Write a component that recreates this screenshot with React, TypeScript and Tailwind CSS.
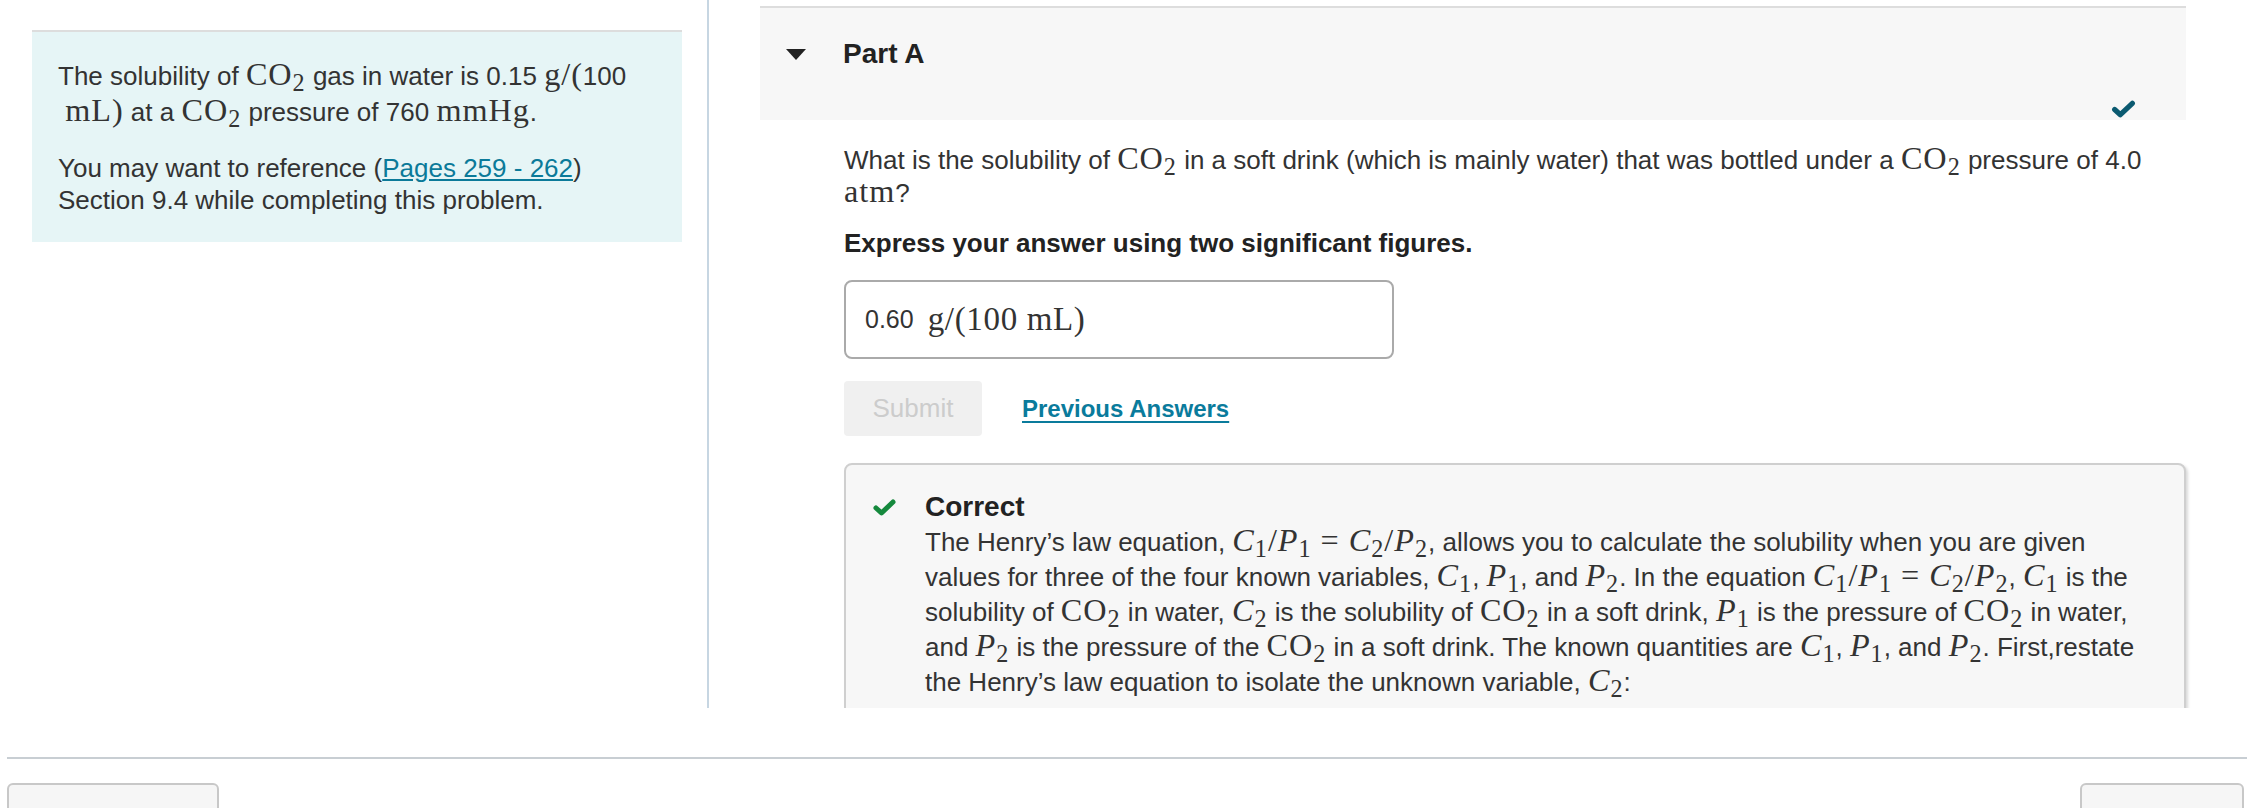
import React from "react";

const M = ({ children }: { children: React.ReactNode }) => (
  <span className="font-['Liberation_Serif','Times_New_Roman',serif] text-[1.24em] leading-none tracking-[0.03em]">
    {children}
  </span>
);

const CO2 = () => (
  <M>
    CO<sub>2</sub>
  </M>
);

const V = ({ v, n }: { v: string; n: string }) => (
  <M>
    <i>{v}</i>
    <sub>{n}</sub>
  </M>
);

const Eq = () => (
  <M>
    <i>C</i>
    <sub>1</sub>/<i>P</i>
    <sub>1</sub> = <i>C</i>
    <sub>2</sub>/<i>P</i>
    <sub>2</sub>
  </M>
);

function Check({ className }: { className: string }) {
  return (
    <svg viewBox="0 0 24 17" className={className} fill="none">
      <polyline
        points="3.5,9 9,14 20.5,3"
        stroke="currentColor"
        strokeWidth="5"
        strokeLinecap="round"
        strokeLinejoin="round"
      />
    </svg>
  );
}

export default function App() {
  return (
    <div className="h-[808px] w-full overflow-hidden bg-white font-['Liberation_Sans',Arial,sans-serif] text-[26px] text-[#333]">
      <div className="flex h-[708px] overflow-hidden">
        <aside className="w-[709px] shrink-0 border-r-2 border-[#c7d6e2] pl-[32px] pr-[25px] pt-[30px]">
          <div className="border-t-2 border-[#dddddd] bg-[#e6f5f6] px-[26px] pb-[26px] pt-[26px]">
            <p className="whitespace-nowrap leading-[36px]">
              The solubility of <CO2 /> gas in water is 0.15 <M>g/(</M>100
              <br />
              {"\u00a0"}
              <M>mL)</M> at a <CO2 /> pressure of 760 <M>mmHg</M>.
            </p>
            <p className="mt-[22px] whitespace-nowrap leading-[32px]">
              You may want to reference (
              <a className="text-[#0b7a99] underline underline-offset-2">Pages 259 - 262</a>)
              <br />
              Section 9.4 while completing this problem.
            </p>
          </div>
        </aside>

        <main className="min-w-0 flex-1 pl-[51px] pr-[68px] pt-[6px]">
          <div className="flex h-[114px] flex-col border-t-2 border-[#dddddd] bg-[#f7f7f7] pl-[26px] pr-[50px] pt-[29px]">
            <div className="flex h-[34px] items-center">
              <svg viewBox="0 0 20 11" className="h-[11px] w-[20px]">
                <polygon points="0,0 20,0 10,11" fill="#222" />
              </svg>
              <span className="ml-[37px] text-[28px] font-bold text-[#222]">Part A</span>
            </div>
            <div className="mt-auto flex justify-end pb-[2px]">
              <Check className="h-[18px] w-[25px] text-[#0b5a70]" />
            </div>
          </div>

          <div className="pl-[84px]">
            <p className="mt-[22px] whitespace-nowrap leading-[30px]">
              What is the solubility of <CO2 /> in a soft drink (which is mainly water) that was
              bottled under a <CO2 /> pressure of 4.0
              <br />
              <M>atm</M>?
            </p>
            <p className="mt-[19px] font-bold leading-[32px] text-[#222]">
              Express your answer using two significant figures.
            </p>

            <div className="mt-[21px] flex h-[79px] w-[550px] items-center rounded-[8px] border-2 border-[#aaaaaa] px-[19px]">
              <span className="text-[25px]">0.60</span>
              <span className="ml-[14px] font-['Liberation_Serif','Times_New_Roman',serif] text-[33px] tracking-[0.02em]">
                g/(100 mL)
              </span>
            </div>

            <div className="mt-[22px] flex items-center gap-[40px]">
              <button className="h-[55px] w-[138px] rounded-[4px] bg-[#f0f0f0] text-[26px] text-[#cccccc]">
                Submit
              </button>
              <a className="text-[24px] font-bold text-[#0a7b9c] underline underline-offset-4">
                Previous Answers
              </a>
            </div>

            <div className="mt-[27px] flex rounded-[8px] border-2 border-[#cfcfcf] bg-[#f7f7f7] pl-[26px] pr-[10px] pt-[25px] pb-[20px] shadow-[2px_2px_3px_rgba(0,0,0,0.15)]">
              <Check className="mt-[9px] h-[17px] w-[25px] shrink-0 text-[#15893d]" />
              <div className="ml-[28px] leading-[34px]">
                <div className="text-[28px] font-bold text-[#222]">Correct</div>
                <p className="whitespace-nowrap">
                  The Henry’s law equation, <Eq />, allows you to calculate the solubility when you
                  are given
                  <br />
                  values for three of the four known variables, <V v="C" n="1" />, <V v="P" n="1" />,
                  and <V v="P" n="2" />. In the equation <Eq />, <V v="C" n="1" /> is the
                  <br />
                  solubility of <CO2 /> in water, <V v="C" n="2" /> is the solubility of <CO2 /> in a
                  soft drink, <V v="P" n="1" /> is the pressure of <CO2 /> in water,
                  <br />
                  and <V v="P" n="2" /> is the pressure of the <CO2 /> in a soft drink. The known
                  quantities are <V v="C" n="1" />, <V v="P" n="1" />, and <V v="P" n="2" />.
                  First,restate
                  <br />
                  the Henry’s law equation to isolate the unknown variable, <V v="C" n="2" />:
                </p>
              </div>
            </div>
          </div>
        </main>
      </div>

      <div className="mx-[7px] mt-[49px] border-t-2 border-[#c8ced3]" />
      <div className="mt-[24px] flex justify-between pl-[7px] pr-[10px]">
        <div className="h-[50px] w-[212px] rounded-[6px] border-2 border-[#c8c8c8] bg-[#f6f6f6]" />
        <div className="h-[50px] w-[164px] rounded-[6px] border-2 border-[#c8c8c8] bg-[#f6f6f6]" />
      </div>
    </div>
  );
}
